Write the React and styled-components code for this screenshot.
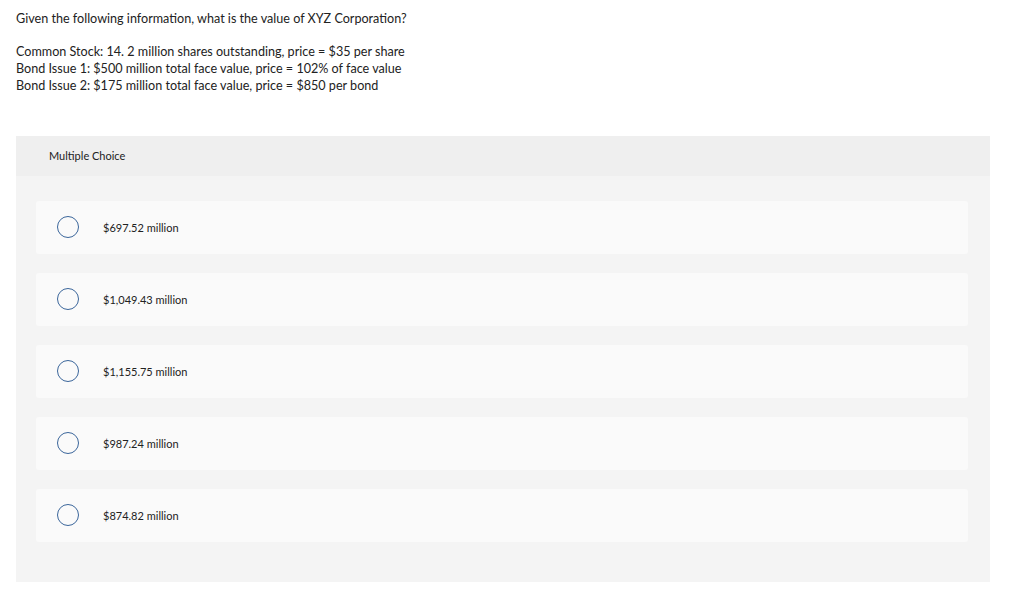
import React from 'react'
import styled, { createGlobalStyle } from 'styled-components'

const GlobalStyle = createGlobalStyle`
  body {
    margin: 0;
    background: #ffffff;
    font-family: Lato, 'Open Sans', sans-serif;
    color: #1f1f1f;
  }
`

const options = [
  '$697.52 million',
  '$1,049.43 million',
  '$1,155.75 million',
  '$987.24 million',
  '$874.82 million'
]

function App() {
  return (
    <Page>
      <GlobalStyle />
      <Question>
        <Line>Given the following information, what is the value of XYZ Corporation?</Line>
        <Blank />
        <Line>Common Stock: 14. 2 million shares outstanding, price = $35 per share</Line>
        <Line>Bond Issue 1: $500 million total face value, price = 102% of face value</Line>
        <Line>Bond Issue 2: $175 million total face value, price = $850 per bond</Line>
      </Question>
      <Panel>
        <Header>Multiple Choice</Header>
        <Choices>
          {options.map((o) => (
            <Choice key={o}>
              <Radio />
              <Label>{o}</Label>
            </Choice>
          ))}
        </Choices>
      </Panel>
    </Page>
  )
}

const Page = styled.div`
  width: 1024px;
  height: 590px;
  padding: 10px 34px 0 16px;
  box-sizing: border-box;
`

const Question = styled.div`
  font-size: 12.6px;
  line-height: 17.3px;
  color: #222;
`

const Line = styled.div``

const Blank = styled.div`
  height: 15.5px;
`

const Panel = styled.div`
  margin-top: 41px;
  background: #f4f4f4;
  padding-bottom: 40px;
`

const Header = styled.div`
  height: 40px;
  background: #efefef;
  display: flex;
  align-items: center;
  padding-left: 33px;
  font-size: 11px;
  color: #222;
`

const Choices = styled.div`
  display: flex;
  flex-direction: column;
  gap: 19px;
  padding: 25px 22px 0 20px;
`

const Choice = styled.div`
  height: 53px;
  background: #fafafa;
  border-radius: 3px;
  display: flex;
  align-items: center;
  padding-left: 21px;
`

const Radio = styled.span`
  width: 20px;
  height: 20px;
  border: 1.3px solid #3b669b;
  border-radius: 50%;
  flex: none;
`

const Label = styled.span`
  margin-left: 24px;
  font-size: 11px;
  color: #222;
`

export default App
